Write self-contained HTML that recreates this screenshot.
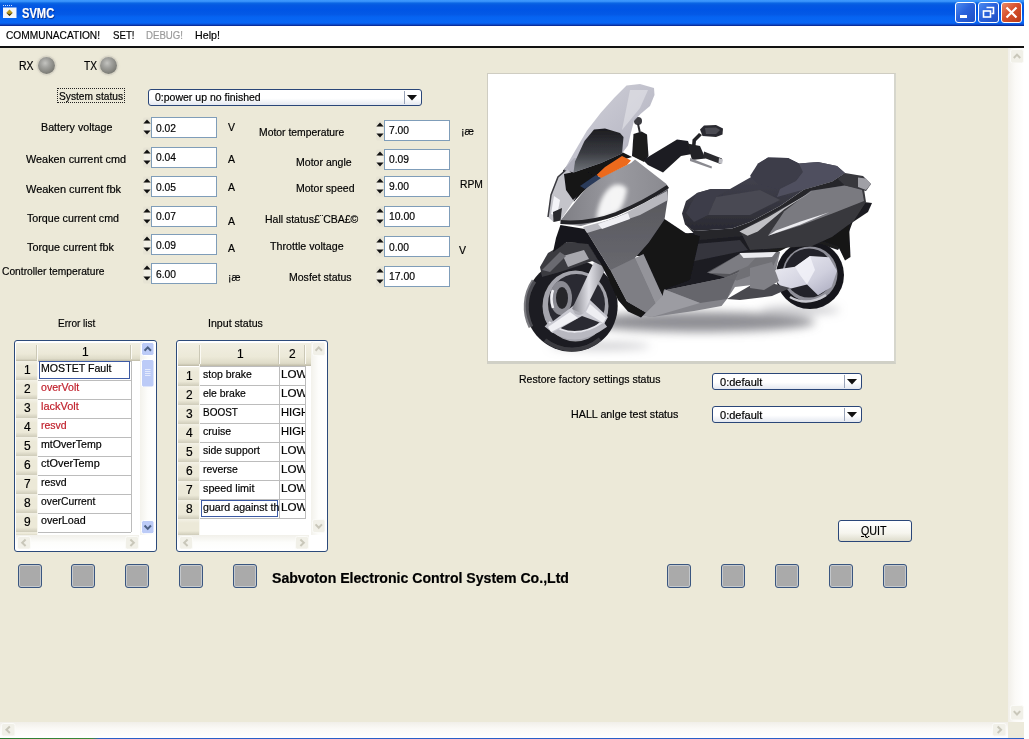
<!DOCTYPE html><html><head><meta charset="utf-8"><title>SVMC</title><style>
html,body{margin:0;padding:0;}
body{width:1029px;height:739px;overflow:hidden;background:#fff;position:relative;font-family:"Liberation Sans",sans-serif;font-size:11px;color:#000;}
#win{position:absolute;left:0;top:0;width:1024px;height:739px;background:#ece9d8;overflow:hidden;}
.abs{position:absolute;}
.t{position:absolute;white-space:nowrap;-webkit-text-stroke:.2px;font-size:11px;line-height:14px;height:14px;transform-origin:0 50%;}
#title{position:absolute;left:0;top:0;width:1024px;height:26px;background:linear-gradient(to bottom,#3c98fd 0,#3a94fb 5%,#0a66e4 12%,#0458e2 20%,#0055e5 38%,#0459e6 55%,#0664f2 66%,#0866f5 88%,#0a52d8 93%,#0a2e9c 98%,#0a2e9c 100%);}
.wb{position:absolute;top:2px;width:21px;height:21px;box-sizing:border-box;border:1px solid #fff;border-radius:3px;background:linear-gradient(135deg,#4d8cf0 0%,#2a62dc 45%,#1f4fc4 100%);}
.wb.close{background:linear-gradient(135deg,#e88a6a 0%,#d8512c 45%,#b83a18 100%);}
#menu{position:absolute;left:0;top:26px;width:1024px;height:20px;background:#fff;}
#mline{position:absolute;left:0;top:46px;width:1024px;height:2px;background:#111;}
.num{position:absolute;box-sizing:border-box;height:21px;width:66px;border:1px solid #7f9db9;background:#fff;}
.spin{position:absolute;width:8px;height:21px;}
.combo{position:absolute;box-sizing:border-box;height:17px;border:1px solid #2a4678;border-radius:3px;background:linear-gradient(to bottom,#fff 0%,#fff 55%,#e4e8f0 100%);}
.combo i{position:absolute;right:16px;top:1px;width:1px;height:13px;background:#9aa4b8;}
.combo b{position:absolute;right:3.5px;top:4.5px;width:11px;height:6px;background:#111;clip-path:polygon(0 0,100% 0,50% 100%);}
.sq{position:absolute;top:564px;width:24px;height:24px;box-sizing:border-box;border:1px solid #3a5680;border-radius:3px;background:#aaa;box-shadow:inset 0 0 0 1px #c4c8cc;}
.led{position:absolute;width:17px;height:17px;border-radius:50%;background:radial-gradient(circle at 42% 36%,#c4c4c0 0%,#a2a29e 30%,#85857f 62%,#60605a 100%);box-shadow:0 0 0 1.5px rgba(214,211,196,.9),0 0 2px 2px rgba(225,222,208,.6);}
</style></head><body><div id="win">
<div id="title"><svg class="abs" style="left:2px;top:5px" width="16" height="15" viewBox="0 0 16 15"><path d="M1 .5h10" stroke="#cfe0ff" stroke-width="1" stroke-dasharray="1 1"/><rect x="1" y="2.5" width="13.5" height="10.5" fill="#f4f6fa"/><path d="M7.5 4.5l3.2 3.2-3.2 3.4-3.2-3.4z" fill="#b89a20"/><path d="M4.3 7.7l3.2 3.4 3.2-3.4-3.2 1.6z" fill="#3a3010"/></svg>
<div class="t" style="left:22px;top:4.84px;font-size:14.3px;line-height:17.3px;height:17.3px;font-weight:bold;transform:scaleX(0.7794);color:#fff;text-shadow:1px 1px 1px #0a2a80;">SVMC</div>
<div class="wb" style="left:955px"><svg width="19" height="19" viewBox="0 0 19 19"><rect x="4" y="12" width="7" height="3" fill="#fff"/></svg></div>
<div class="wb" style="left:978px"><svg width="19" height="19" viewBox="0 0 19 19"><path d="M7.5 4.5h7v6h-2" fill="none" stroke="#fff" stroke-width="1.6"/><rect x="4.5" y="8" width="7" height="6" fill="none" stroke="#fff" stroke-width="1.6"/></svg></div>
<div class="wb close" style="left:1001px"><svg width="19" height="19" viewBox="0 0 19 19"><path d="M4.5 4.5l10 10M14.5 4.5l-10 10" stroke="#fff" stroke-width="2.2"/></svg></div>
</div>
<div id="menu"></div><div id="mline"></div>
<div class="t" style="left:6px;top:28.02px;font-size:11.6px;line-height:14.6px;height:14.6px;transform:scaleX(0.8757);color:#000;">COMMUNACATION!</div>
<div class="t" style="left:112.5px;top:28.02px;font-size:11.6px;line-height:14.6px;height:14.6px;transform:scaleX(0.8339);color:#000;">SET!</div>
<div class="t" style="left:146px;top:28.02px;font-size:11.6px;line-height:14.6px;height:14.6px;transform:scaleX(0.8323);color:#9a9a9a;">DEBUG!</div>
<div class="t" style="left:195px;top:28.02px;font-size:11.6px;line-height:14.6px;height:14.6px;transform:scaleX(0.9233);color:#000;">Help!</div>
<div class="t" style="left:19.4px;top:59.04px;font-size:12.4px;line-height:15.4px;height:15.4px;transform:scaleX(0.8479);">RX</div>
<div class="led" style="left:37.5px;top:56.5px"></div>
<div class="t" style="left:84px;top:59.04px;font-size:12.4px;line-height:15.4px;height:15.4px;transform:scaleX(0.8205);">TX</div>
<div class="led" style="left:99.5px;top:56.5px"></div>
<div class="abs" style="left:57px;top:88px;width:68px;height:15px;box-sizing:border-box;border:1px dotted #222"></div>
<div class="t" style="left:59px;top:88.52px;font-size:11.6px;line-height:14.6px;height:14.6px;transform:scaleX(0.8790);">System status</div>
<div class="combo" style="left:148px;top:89px;width:274px"><i></i><b></b></div>
<div class="t" style="left:154.8px;top:90.32px;font-size:11.6px;line-height:14.6px;height:14.6px;transform:scaleX(0.9060);">0:power up no finished</div>
<div class="t" style="left:41px;top:120.02px;font-size:11.6px;line-height:14.6px;height:14.6px;transform:scaleX(0.9232);">Battery voltage</div>
<svg class="spin" style="left:142.5px;top:117.2px" width="8" height="21" viewBox="0 0 8 21"><rect x="0" y="0.5" width="8" height="20" rx="2" fill="#e6e3d4"/><rect x="0.5" y="7" width="7" height="7" fill="#f2f0e6"/><path d="M4 2.6L7.6 6.4H0.4z" fill="#111"/><path d="M4 17.4L7.6 13.6H0.4z" fill="#111"/></svg>
<div class="num" style="left:151px;top:117.2px"></div>
<div class="t" style="left:155.5px;top:120.52px;font-size:11.6px;line-height:14.6px;height:14.6px;transform:scaleX(0.8858);">0.02</div>
<div class="t" style="left:228px;top:120.02px;font-size:11.6px;line-height:14.6px;height:14.6px;transform:scaleX(0.9051);">V</div>
<div class="t" style="left:26px;top:152.02px;font-size:11.6px;line-height:14.6px;height:14.6px;transform:scaleX(0.9368);">Weaken current cmd</div>
<svg class="spin" style="left:142.5px;top:147px" width="8" height="21" viewBox="0 0 8 21"><rect x="0" y="0.5" width="8" height="20" rx="2" fill="#e6e3d4"/><rect x="0.5" y="7" width="7" height="7" fill="#f2f0e6"/><path d="M4 2.6L7.6 6.4H0.4z" fill="#111"/><path d="M4 17.4L7.6 13.6H0.4z" fill="#111"/></svg>
<div class="num" style="left:151px;top:147px"></div>
<div class="t" style="left:155.5px;top:150.32px;font-size:11.6px;line-height:14.6px;height:14.6px;transform:scaleX(0.8858);">0.04</div>
<div class="t" style="left:228px;top:152.02px;font-size:11.6px;line-height:14.6px;height:14.6px;transform:scaleX(0.9051);">A</div>
<div class="t" style="left:26px;top:182.02px;font-size:11.6px;line-height:14.6px;height:14.6px;transform:scaleX(0.9469);">Weaken current fbk</div>
<svg class="spin" style="left:142.5px;top:176.4px" width="8" height="21" viewBox="0 0 8 21"><rect x="0" y="0.5" width="8" height="20" rx="2" fill="#e6e3d4"/><rect x="0.5" y="7" width="7" height="7" fill="#f2f0e6"/><path d="M4 2.6L7.6 6.4H0.4z" fill="#111"/><path d="M4 17.4L7.6 13.6H0.4z" fill="#111"/></svg>
<div class="num" style="left:151px;top:176.4px"></div>
<div class="t" style="left:155.5px;top:179.72px;font-size:11.6px;line-height:14.6px;height:14.6px;transform:scaleX(0.8858);">0.05</div>
<div class="t" style="left:228px;top:179.52px;font-size:11.6px;line-height:14.6px;height:14.6px;transform:scaleX(0.9051);">A</div>
<div class="t" style="left:27px;top:211.02px;font-size:11.6px;line-height:14.6px;height:14.6px;transform:scaleX(0.9210);">Torque current cmd</div>
<svg class="spin" style="left:142.5px;top:205.5px" width="8" height="21" viewBox="0 0 8 21"><rect x="0" y="0.5" width="8" height="20" rx="2" fill="#e6e3d4"/><rect x="0.5" y="7" width="7" height="7" fill="#f2f0e6"/><path d="M4 2.6L7.6 6.4H0.4z" fill="#111"/><path d="M4 17.4L7.6 13.6H0.4z" fill="#111"/></svg>
<div class="num" style="left:151px;top:205.5px"></div>
<div class="t" style="left:155.5px;top:208.82px;font-size:11.6px;line-height:14.6px;height:14.6px;transform:scaleX(0.8858);">0.07</div>
<div class="t" style="left:228px;top:214.02px;font-size:11.6px;line-height:14.6px;height:14.6px;transform:scaleX(0.9051);">A</div>
<div class="t" style="left:27px;top:239.52px;font-size:11.6px;line-height:14.6px;height:14.6px;transform:scaleX(0.9309);">Torque current fbk</div>
<svg class="spin" style="left:142.5px;top:234.2px" width="8" height="21" viewBox="0 0 8 21"><rect x="0" y="0.5" width="8" height="20" rx="2" fill="#e6e3d4"/><rect x="0.5" y="7" width="7" height="7" fill="#f2f0e6"/><path d="M4 2.6L7.6 6.4H0.4z" fill="#111"/><path d="M4 17.4L7.6 13.6H0.4z" fill="#111"/></svg>
<div class="num" style="left:151px;top:234.2px"></div>
<div class="t" style="left:155.5px;top:237.52px;font-size:11.6px;line-height:14.6px;height:14.6px;transform:scaleX(0.8858);">0.09</div>
<div class="t" style="left:228px;top:240.72px;font-size:11.6px;line-height:14.6px;height:14.6px;transform:scaleX(0.9051);">A</div>
<div class="t" style="left:1.5px;top:263.52px;font-size:11.6px;line-height:14.6px;height:14.6px;transform:scaleX(0.8836);">Controller temperature</div>
<svg class="spin" style="left:142.5px;top:263.3px" width="8" height="21" viewBox="0 0 8 21"><rect x="0" y="0.5" width="8" height="20" rx="2" fill="#e6e3d4"/><rect x="0.5" y="7" width="7" height="7" fill="#f2f0e6"/><path d="M4 2.6L7.6 6.4H0.4z" fill="#111"/><path d="M4 17.4L7.6 13.6H0.4z" fill="#111"/></svg>
<div class="num" style="left:151px;top:263.3px"></div>
<div class="t" style="left:155.5px;top:266.62px;font-size:11.6px;line-height:14.6px;height:14.6px;transform:scaleX(0.8858);">6.00</div>
<div class="t" style="left:228.4px;top:270.02px;font-size:11.6px;line-height:14.6px;height:14.6px;transform:scaleX(0.8750);">¡æ</div>
<div class="t" style="left:258.7px;top:125.02px;font-size:11.6px;line-height:14.6px;height:14.6px;transform:scaleX(0.8944);">Motor temperature</div>
<svg class="spin" style="left:375.5px;top:120px" width="8" height="21" viewBox="0 0 8 21"><rect x="0" y="0.5" width="8" height="20" rx="2" fill="#e6e3d4"/><rect x="0.5" y="7" width="7" height="7" fill="#f2f0e6"/><path d="M4 2.6L7.6 6.4H0.4z" fill="#111"/><path d="M4 17.4L7.6 13.6H0.4z" fill="#111"/></svg>
<div class="num" style="left:384px;top:120px"></div>
<div class="t" style="left:389px;top:123.32px;font-size:11.6px;line-height:14.6px;height:14.6px;transform:scaleX(0.8858);">7.00</div>
<div class="t" style="left:461.4px;top:124.22px;font-size:11.6px;line-height:14.6px;height:14.6px;transform:scaleX(0.9173);">¡æ</div>
<div class="t" style="left:295.5px;top:154.72px;font-size:11.6px;line-height:14.6px;height:14.6px;transform:scaleX(0.9096);">Motor angle</div>
<svg class="spin" style="left:375.5px;top:149px" width="8" height="21" viewBox="0 0 8 21"><rect x="0" y="0.5" width="8" height="20" rx="2" fill="#e6e3d4"/><rect x="0.5" y="7" width="7" height="7" fill="#f2f0e6"/><path d="M4 2.6L7.6 6.4H0.4z" fill="#111"/><path d="M4 17.4L7.6 13.6H0.4z" fill="#111"/></svg>
<div class="num" style="left:384px;top:149px"></div>
<div class="t" style="left:389px;top:152.32px;font-size:11.6px;line-height:14.6px;height:14.6px;transform:scaleX(0.8858);">0.09</div>
<div class="t" style="left:295.5px;top:181.02px;font-size:11.6px;line-height:14.6px;height:14.6px;transform:scaleX(0.9076);">Motor speed</div>
<svg class="spin" style="left:375.5px;top:176px" width="8" height="21" viewBox="0 0 8 21"><rect x="0" y="0.5" width="8" height="20" rx="2" fill="#e6e3d4"/><rect x="0.5" y="7" width="7" height="7" fill="#f2f0e6"/><path d="M4 2.6L7.6 6.4H0.4z" fill="#111"/><path d="M4 17.4L7.6 13.6H0.4z" fill="#111"/></svg>
<div class="num" style="left:384px;top:176px"></div>
<div class="t" style="left:389px;top:179.32px;font-size:11.6px;line-height:14.6px;height:14.6px;transform:scaleX(0.8858);">9.00</div>
<div class="t" style="left:459.7px;top:177.02px;font-size:11.6px;line-height:14.6px;height:14.6px;transform:scaleX(0.8888);">RPM</div>
<div class="t" style="left:265.4px;top:212.02px;font-size:11.6px;line-height:14.6px;height:14.6px;transform:scaleX(0.9035);">Hall status£¨CBA£©</div>
<svg class="spin" style="left:375.5px;top:206px" width="8" height="21" viewBox="0 0 8 21"><rect x="0" y="0.5" width="8" height="20" rx="2" fill="#e6e3d4"/><rect x="0.5" y="7" width="7" height="7" fill="#f2f0e6"/><path d="M4 2.6L7.6 6.4H0.4z" fill="#111"/><path d="M4 17.4L7.6 13.6H0.4z" fill="#111"/></svg>
<div class="num" style="left:384px;top:206px"></div>
<div class="t" style="left:388.5px;top:209.32px;font-size:11.6px;line-height:14.6px;height:14.6px;transform:scaleX(0.8961);">10.00</div>
<div class="t" style="left:270.4px;top:239.02px;font-size:11.6px;line-height:14.6px;height:14.6px;transform:scaleX(0.9209);">Throttle voltage</div>
<svg class="spin" style="left:375.5px;top:236.2px" width="8" height="21" viewBox="0 0 8 21"><rect x="0" y="0.5" width="8" height="20" rx="2" fill="#e6e3d4"/><rect x="0.5" y="7" width="7" height="7" fill="#f2f0e6"/><path d="M4 2.6L7.6 6.4H0.4z" fill="#111"/><path d="M4 17.4L7.6 13.6H0.4z" fill="#111"/></svg>
<div class="num" style="left:384px;top:236.2px"></div>
<div class="t" style="left:389px;top:239.52px;font-size:11.6px;line-height:14.6px;height:14.6px;transform:scaleX(0.8858);">0.00</div>
<div class="t" style="left:459px;top:242.52px;font-size:11.6px;line-height:14.6px;height:14.6px;transform:scaleX(0.9051);">V</div>
<div class="t" style="left:288.6px;top:270.02px;font-size:11.6px;line-height:14.6px;height:14.6px;transform:scaleX(0.9079);">Mosfet status</div>
<svg class="spin" style="left:375.5px;top:266px" width="8" height="21" viewBox="0 0 8 21"><rect x="0" y="0.5" width="8" height="20" rx="2" fill="#e6e3d4"/><rect x="0.5" y="7" width="7" height="7" fill="#f2f0e6"/><path d="M4 2.6L7.6 6.4H0.4z" fill="#111"/><path d="M4 17.4L7.6 13.6H0.4z" fill="#111"/></svg>
<div class="num" style="left:384px;top:266px"></div>
<div class="t" style="left:388.5px;top:269.32px;font-size:11.6px;line-height:14.6px;height:14.6px;transform:scaleX(0.8961);">17.00</div>
<div class="t" style="left:518.5px;top:372.32px;font-size:11.6px;line-height:14.6px;height:14.6px;transform:scaleX(0.9073);">Restore factory settings status</div>
<div class="combo" style="left:712px;top:373px;width:150px"><i></i><b></b></div>
<div class="t" style="left:719.7px;top:374.52px;font-size:11.6px;line-height:14.6px;height:14.6px;transform:scaleX(0.9509);">0:default</div>
<div class="t" style="left:571px;top:406.52px;font-size:11.6px;line-height:14.6px;height:14.6px;transform:scaleX(0.9240);">HALL anlge test status</div>
<div class="combo" style="left:712px;top:406px;width:150px"><i></i><b></b></div>
<div class="t" style="left:719.7px;top:407.52px;font-size:11.6px;line-height:14.6px;height:14.6px;transform:scaleX(0.9509);">0:default</div>
<div class="abs" style="left:838px;top:520px;width:74px;height:22px;box-sizing:border-box;border:1px solid #2a4678;border-radius:3px;background:linear-gradient(to bottom,#fff 0%,#f6f5ee 60%,#dedccc 100%)"></div>
<div class="t" style="left:861px;top:523.63px;font-size:12px;line-height:15px;height:15px;transform:scaleX(0.8894);"><u>Q</u>UIT</div>
<div class="sq" style="left:18px"></div>
<div class="sq" style="left:71px"></div>
<div class="sq" style="left:125px"></div>
<div class="sq" style="left:178.5px"></div>
<div class="sq" style="left:232.5px"></div>
<div class="sq" style="left:667px"></div>
<div class="sq" style="left:721px"></div>
<div class="sq" style="left:775px"></div>
<div class="sq" style="left:829px"></div>
<div class="sq" style="left:883px"></div>
<div class="t" style="left:271.8px;top:570.09px;font-size:14px;line-height:17px;height:17px;font-weight:bold;transform:scaleX(1.0074);">Sabvoton Electronic Control System Co.,Ltd</div>
<div class="t" style="left:58px;top:315.72px;font-size:11.6px;line-height:14.6px;height:14.6px;transform:scaleX(0.8666);">Error list</div>
<div class="t" style="left:208.4px;top:315.72px;font-size:11.6px;line-height:14.6px;height:14.6px;transform:scaleX(0.9157);">Input status</div>
<div class="abs" style="left:14px;top:340px;width:143px;height:212.29999999999995px;box-sizing:border-box;border:1px solid #2c4a7a;border-radius:3px;background:#fff;overflow:hidden">
<div class="abs" style="left:1.0px;top:1.5px;width:124.0px;height:18.0px;background:linear-gradient(to bottom,#f1efe2 0%,#ece9d8 60%,#dedbc8 88%,#bdb9a6 100%)"></div>
<div class="abs" style="left:1.0px;top:20.0px;width:21.5px;height:19.0px;background:linear-gradient(to bottom,#f3f1e6 0%,#ece9d8 25%,#ece9d8 75%,#cfccba 100%)"></div>
<div class="abs" style="left:1.0px;top:39.0px;width:21.5px;height:19.0px;background:linear-gradient(to bottom,#f3f1e6 0%,#ece9d8 25%,#ece9d8 75%,#cfccba 100%)"></div>
<div class="abs" style="left:1.0px;top:58.0px;width:21.5px;height:19.0px;background:linear-gradient(to bottom,#f3f1e6 0%,#ece9d8 25%,#ece9d8 75%,#cfccba 100%)"></div>
<div class="abs" style="left:1.0px;top:77.0px;width:21.5px;height:19.0px;background:linear-gradient(to bottom,#f3f1e6 0%,#ece9d8 25%,#ece9d8 75%,#cfccba 100%)"></div>
<div class="abs" style="left:1.0px;top:96.0px;width:21.5px;height:19.0px;background:linear-gradient(to bottom,#f3f1e6 0%,#ece9d8 25%,#ece9d8 75%,#cfccba 100%)"></div>
<div class="abs" style="left:1.0px;top:115.0px;width:21.5px;height:19.0px;background:linear-gradient(to bottom,#f3f1e6 0%,#ece9d8 25%,#ece9d8 75%,#cfccba 100%)"></div>
<div class="abs" style="left:1.0px;top:134.0px;width:21.5px;height:19.0px;background:linear-gradient(to bottom,#f3f1e6 0%,#ece9d8 25%,#ece9d8 75%,#cfccba 100%)"></div>
<div class="abs" style="left:1.0px;top:153.0px;width:21.5px;height:19.0px;background:linear-gradient(to bottom,#f3f1e6 0%,#ece9d8 25%,#ece9d8 75%,#cfccba 100%)"></div>
<div class="abs" style="left:1.0px;top:172.0px;width:21.5px;height:19.0px;background:linear-gradient(to bottom,#f3f1e6 0%,#ece9d8 25%,#ece9d8 75%,#cfccba 100%)"></div>
<div class="abs" style="left:1.0px;top:191.0px;width:21.5px;height:3.3px;background:linear-gradient(to bottom,#f3f1e6 0%,#ece9d8 25%,#ece9d8 75%,#cfccba 100%)"></div>
<div class="abs" style="left:21.5px;top:3.5px;width:1.0px;height:190.8px;background:#f8f7f0"></div>
<div class="abs" style="left:22.0px;top:3.5px;width:1.0px;height:14.0px;background:#fbfaf4"></div>
<div class="abs" style="left:21.0px;top:3.5px;width:1.0px;height:14.0px;background:#cbc8b6"></div>
<div class="abs" style="left:115.5px;top:3.5px;width:1.0px;height:14.0px;background:#fbfaf4"></div>
<div class="abs" style="left:114.5px;top:3.5px;width:1.0px;height:14.0px;background:#cbc8b6"></div>
<div class="abs" style="left:22.5px;top:19.5px;width:93.5px;height:1.0px;background:#bcbcbc"></div>
<div class="abs" style="left:22.5px;top:38.5px;width:93.5px;height:1.0px;background:#bcbcbc"></div>
<div class="abs" style="left:22.5px;top:57.5px;width:93.5px;height:1.0px;background:#bcbcbc"></div>
<div class="abs" style="left:22.5px;top:76.5px;width:93.5px;height:1.0px;background:#bcbcbc"></div>
<div class="abs" style="left:22.5px;top:95.5px;width:93.5px;height:1.0px;background:#bcbcbc"></div>
<div class="abs" style="left:22.5px;top:114.5px;width:93.5px;height:1.0px;background:#bcbcbc"></div>
<div class="abs" style="left:22.5px;top:133.5px;width:93.5px;height:1.0px;background:#bcbcbc"></div>
<div class="abs" style="left:22.5px;top:152.5px;width:93.5px;height:1.0px;background:#bcbcbc"></div>
<div class="abs" style="left:22.5px;top:171.5px;width:93.5px;height:1.0px;background:#bcbcbc"></div>
<div class="abs" style="left:22.5px;top:190.5px;width:93.5px;height:1.0px;background:#bcbcbc"></div>
<div class="abs" style="left:115.5px;top:20.0px;width:1.0px;height:171.0px;background:#bcbcbc"></div>
<div class="abs" style="left:23.5px;top:20.3px;width:91.3px;height:17.4px;box-sizing:border-box;border:1px solid #3c5aa4"></div>
<div class="abs" style="left:125.0px;top:1.0px;width:15.5px;height:193.3px;background:linear-gradient(to right,#f3f2ec,#fdfdfb 50%,#fff)"></div>
<div class="abs" style="left:1.0px;top:194.3px;width:122.5px;height:14.4px;background:linear-gradient(to bottom,#f1f0ea,#fdfdfb 50%,#fff)"></div>
</div>
<svg class="abs" style="left:140.5px;top:342.2px;opacity:1" width="13.5" height="14" viewBox="0 0 13.5 14"><rect x=".5" y=".5" width="12.5" height="13" rx="2" fill="#bccbf7" stroke="#fff"/><path d="M3.55 8.8L6.75 5.4L9.95 8.8" fill="none" stroke="#4d6185" stroke-width="2"/></svg>
<svg class="abs" style="left:140.5px;top:519.8px;opacity:1" width="13.5" height="14.2" viewBox="0 0 13.5 14.2"><rect x=".5" y=".5" width="12.5" height="13.2" rx="2" fill="#bccbf7" stroke="#fff"/><path d="M3.55 5.5L6.75 8.9L9.95 5.5" fill="none" stroke="#4d6185" stroke-width="2"/></svg>
<svg class="abs" style="left:140.5px;top:358.5px" width="13.5" height="28.5" viewBox="0 0 13.5 28.5"><rect x=".5" y=".5" width="12.5" height="27.5" rx="2" fill="#bccbf7" stroke="#fff"/><path d="M4 10.5h5.5M4 12.5h5.5M4 14.5h5.5M4 16.5h5.5" stroke="#e4ebfd" stroke-width="1"/></svg>
<svg class="abs" style="left:16.7px;top:535.8px;opacity:1" width="14" height="13.6" viewBox="0 0 14 13.6"><rect x=".5" y=".5" width="13" height="12.6" rx="2" fill="#f1f0e8" stroke="#fbfbf8"/><path d="M8.6 3.5999999999999996L5.2 6.8L8.6 10.0" fill="none" stroke="#c9c7ba" stroke-width="2"/></svg>
<svg class="abs" style="left:124.5px;top:535.8px;opacity:1" width="14" height="13.6" viewBox="0 0 14 13.6"><rect x=".5" y=".5" width="13" height="12.6" rx="2" fill="#f1f0e8" stroke="#fbfbf8"/><path d="M5.4 3.5999999999999996L8.8 6.8L5.4 10.0" fill="none" stroke="#c9c7ba" stroke-width="2"/></svg>
<div class="t" style="left:81.7px;top:344.64px;font-size:12.4px;line-height:15.4px;height:15.4px;transform:scaleX(0.9658);">1</div>
<div class="t" style="left:40.8px;top:361.02px;font-size:11.6px;line-height:14.6px;height:14.6px;transform:scaleX(0.9145);color:#000;">MOSTET Fault</div>
<div class="t" style="left:24px;top:363.34px;font-size:12.4px;line-height:15.4px;height:15.4px;transform:scaleX(0.9658);">1</div>
<div class="t" style="left:40.8px;top:380.02px;font-size:11.6px;line-height:14.6px;height:14.6px;transform:scaleX(0.9116);color:#c0202c;">overVolt</div>
<div class="t" style="left:24px;top:382.34px;font-size:12.4px;line-height:15.4px;height:15.4px;transform:scaleX(0.9658);">2</div>
<div class="t" style="left:40.8px;top:399.02px;font-size:11.6px;line-height:14.6px;height:14.6px;transform:scaleX(0.9432);color:#c0202c;">lackVolt</div>
<div class="t" style="left:24px;top:401.34px;font-size:12.4px;line-height:15.4px;height:15.4px;transform:scaleX(0.9658);">3</div>
<div class="t" style="left:40.8px;top:418.02px;font-size:11.6px;line-height:14.6px;height:14.6px;transform:scaleX(0.9062);color:#c0202c;">resvd</div>
<div class="t" style="left:24px;top:420.34px;font-size:12.4px;line-height:15.4px;height:15.4px;transform:scaleX(0.9658);">4</div>
<div class="t" style="left:40.8px;top:437.02px;font-size:11.6px;line-height:14.6px;height:14.6px;transform:scaleX(0.9147);color:#000;">mtOverTemp</div>
<div class="t" style="left:24px;top:439.34px;font-size:12.4px;line-height:15.4px;height:15.4px;transform:scaleX(0.9658);">5</div>
<div class="t" style="left:40.8px;top:456.02px;font-size:11.6px;line-height:14.6px;height:14.6px;transform:scaleX(0.9392);color:#000;">ctOverTemp</div>
<div class="t" style="left:24px;top:458.34px;font-size:12.4px;line-height:15.4px;height:15.4px;transform:scaleX(0.9658);">6</div>
<div class="t" style="left:40.8px;top:475.02px;font-size:11.6px;line-height:14.6px;height:14.6px;transform:scaleX(0.9062);color:#000;">resvd</div>
<div class="t" style="left:24px;top:477.34px;font-size:12.4px;line-height:15.4px;height:15.4px;transform:scaleX(0.9658);">7</div>
<div class="t" style="left:40.8px;top:494.02px;font-size:11.6px;line-height:14.6px;height:14.6px;transform:scaleX(0.8886);color:#000;">overCurrent</div>
<div class="t" style="left:24px;top:496.34px;font-size:12.4px;line-height:15.4px;height:15.4px;transform:scaleX(0.9658);">8</div>
<div class="t" style="left:40.8px;top:513.02px;font-size:11.6px;line-height:14.6px;height:14.6px;transform:scaleX(0.9243);color:#000;">overLoad</div>
<div class="t" style="left:24px;top:515.34px;font-size:12.4px;line-height:15.4px;height:15.4px;transform:scaleX(0.9658);">9</div>
<div class="abs" style="left:38px;top:532px;width:93px;height:3.3px;overflow:hidden">
<div class="t" style="left:2.8px;top:0.02px;font-size:11.6px;line-height:14.6px;height:14.6px;transform:scaleX(0.8417);">overSpeed</div>
</div>
<div class="abs" style="left:176px;top:340px;width:151.5px;height:212.29999999999995px;box-sizing:border-box;border:1px solid #2c4a7a;border-radius:3px;background:#fff;overflow:hidden">
<div class="abs" style="left:1.0px;top:1.5px;width:133.0px;height:23.0px;background:linear-gradient(to bottom,#f1efe2 0%,#ece9d8 60%,#dedbc8 88%,#bdb9a6 100%)"></div>
<div class="abs" style="left:1.0px;top:25.5px;width:22.0px;height:19.0px;background:linear-gradient(to bottom,#f3f1e6 0%,#ece9d8 25%,#ece9d8 75%,#cfccba 100%)"></div>
<div class="abs" style="left:1.0px;top:44.5px;width:22.0px;height:19.0px;background:linear-gradient(to bottom,#f3f1e6 0%,#ece9d8 25%,#ece9d8 75%,#cfccba 100%)"></div>
<div class="abs" style="left:1.0px;top:63.5px;width:22.0px;height:19.0px;background:linear-gradient(to bottom,#f3f1e6 0%,#ece9d8 25%,#ece9d8 75%,#cfccba 100%)"></div>
<div class="abs" style="left:1.0px;top:82.5px;width:22.0px;height:19.0px;background:linear-gradient(to bottom,#f3f1e6 0%,#ece9d8 25%,#ece9d8 75%,#cfccba 100%)"></div>
<div class="abs" style="left:1.0px;top:101.5px;width:22.0px;height:19.0px;background:linear-gradient(to bottom,#f3f1e6 0%,#ece9d8 25%,#ece9d8 75%,#cfccba 100%)"></div>
<div class="abs" style="left:1.0px;top:120.5px;width:22.0px;height:19.0px;background:linear-gradient(to bottom,#f3f1e6 0%,#ece9d8 25%,#ece9d8 75%,#cfccba 100%)"></div>
<div class="abs" style="left:1.0px;top:139.5px;width:22.0px;height:19.0px;background:linear-gradient(to bottom,#f3f1e6 0%,#ece9d8 25%,#ece9d8 75%,#cfccba 100%)"></div>
<div class="abs" style="left:1.0px;top:158.5px;width:22.0px;height:19.0px;background:linear-gradient(to bottom,#f3f1e6 0%,#ece9d8 25%,#ece9d8 75%,#cfccba 100%)"></div>
<div class="abs" style="left:1.0px;top:177.5px;width:22.0px;height:16.8px;background:linear-gradient(to bottom,#f3f1e6 0%,#ece9d8 25%,#ece9d8 75%,#cfccba 100%)"></div>
<div class="abs" style="left:22.0px;top:3.5px;width:1.0px;height:190.8px;background:#f8f7f0"></div>
<div class="abs" style="left:22.5px;top:3.5px;width:1.0px;height:19.0px;background:#fbfaf4"></div>
<div class="abs" style="left:21.5px;top:3.5px;width:1.0px;height:19.0px;background:#cbc8b6"></div>
<div class="abs" style="left:101.5px;top:3.5px;width:1.0px;height:19.0px;background:#fbfaf4"></div>
<div class="abs" style="left:100.5px;top:3.5px;width:1.0px;height:19.0px;background:#cbc8b6"></div>
<div class="abs" style="left:128.1px;top:3.5px;width:1.0px;height:19.0px;background:#fbfaf4"></div>
<div class="abs" style="left:127.1px;top:3.5px;width:1.0px;height:19.0px;background:#cbc8b6"></div>
<div class="abs" style="left:23.0px;top:25.0px;width:105.6px;height:1.0px;background:#bcbcbc"></div>
<div class="abs" style="left:23.0px;top:44.0px;width:105.6px;height:1.0px;background:#bcbcbc"></div>
<div class="abs" style="left:23.0px;top:63.0px;width:105.6px;height:1.0px;background:#bcbcbc"></div>
<div class="abs" style="left:23.0px;top:82.0px;width:105.6px;height:1.0px;background:#bcbcbc"></div>
<div class="abs" style="left:23.0px;top:101.0px;width:105.6px;height:1.0px;background:#bcbcbc"></div>
<div class="abs" style="left:23.0px;top:120.0px;width:105.6px;height:1.0px;background:#bcbcbc"></div>
<div class="abs" style="left:23.0px;top:139.0px;width:105.6px;height:1.0px;background:#bcbcbc"></div>
<div class="abs" style="left:23.0px;top:158.0px;width:105.6px;height:1.0px;background:#bcbcbc"></div>
<div class="abs" style="left:23.0px;top:177.0px;width:105.6px;height:1.0px;background:#bcbcbc"></div>
<div class="abs" style="left:101.5px;top:25.5px;width:1.0px;height:152.0px;background:#bcbcbc"></div>
<div class="abs" style="left:128.1px;top:25.5px;width:1.0px;height:152.0px;background:#bcbcbc"></div>
<div class="abs" style="left:24.0px;top:158.8px;width:76.8px;height:17.4px;box-sizing:border-box;border:1px solid #3c5aa4"></div>
<div class="abs" style="left:134.0px;top:1.0px;width:15.0px;height:193.3px;background:linear-gradient(to right,#f3f2ec,#fdfdfb 50%,#fff)"></div>
<div class="abs" style="left:1.0px;top:194.3px;width:130.8px;height:14.4px;background:linear-gradient(to bottom,#f1f0ea,#fdfdfb 50%,#fff)"></div>
</div>
<svg class="abs" style="left:311.5px;top:342.2px;opacity:1" width="13.5" height="14" viewBox="0 0 13.5 14"><rect x=".5" y=".5" width="12.5" height="13" rx="2" fill="#f1f0e8" stroke="#fbfbf8"/><path d="M3.55 8.8L6.75 5.4L9.95 8.8" fill="none" stroke="#c9c7ba" stroke-width="2"/></svg>
<svg class="abs" style="left:311.5px;top:519.3px;opacity:1" width="13.5" height="14" viewBox="0 0 13.5 14"><rect x=".5" y=".5" width="12.5" height="13" rx="2" fill="#f1f0e8" stroke="#fbfbf8"/><path d="M3.55 5.4L6.75 8.8L9.95 5.4" fill="none" stroke="#c9c7ba" stroke-width="2"/></svg>
<svg class="abs" style="left:178.7px;top:535.8px;opacity:1" width="14" height="13.6" viewBox="0 0 14 13.6"><rect x=".5" y=".5" width="13" height="12.6" rx="2" fill="#f1f0e8" stroke="#fbfbf8"/><path d="M8.6 3.5999999999999996L5.2 6.8L8.6 10.0" fill="none" stroke="#c9c7ba" stroke-width="2"/></svg>
<svg class="abs" style="left:294.8px;top:535.8px;opacity:1" width="14" height="13.6" viewBox="0 0 14 13.6"><rect x=".5" y=".5" width="13" height="12.6" rx="2" fill="#f1f0e8" stroke="#fbfbf8"/><path d="M5.4 3.5999999999999996L8.8 6.8L5.4 10.0" fill="none" stroke="#c9c7ba" stroke-width="2"/></svg>
<div class="t" style="left:236.7px;top:346.94px;font-size:12.4px;line-height:15.4px;height:15.4px;transform:scaleX(0.9658);">1</div>
<div class="t" style="left:289.4px;top:346.94px;font-size:12.4px;line-height:15.4px;height:15.4px;transform:scaleX(0.9658);">2</div>
<div class="t" style="left:202.6px;top:367.12px;font-size:11.6px;line-height:14.6px;height:14.6px;transform:scaleX(0.9032);">stop brake</div>
<div class="abs" style="left:279.5px;top:366.5px;width:25.6px;height:18px;overflow:hidden">
<div class="t" style="left:1.8px;top:0.62px;font-size:11.6px;line-height:14.6px;height:14.6px;transform:scaleX(1.0030);">LOW</div>
</div>
<div class="t" style="left:185.8px;top:369.14px;font-size:12.4px;line-height:15.4px;height:15.4px;transform:scaleX(0.9658);">1</div>
<div class="t" style="left:202.6px;top:386.12px;font-size:11.6px;line-height:14.6px;height:14.6px;transform:scaleX(0.8993);">ele brake</div>
<div class="abs" style="left:279.5px;top:385.5px;width:25.6px;height:18px;overflow:hidden">
<div class="t" style="left:1.8px;top:0.62px;font-size:11.6px;line-height:14.6px;height:14.6px;transform:scaleX(1.0030);">LOW</div>
</div>
<div class="t" style="left:185.8px;top:388.14px;font-size:12.4px;line-height:15.4px;height:15.4px;transform:scaleX(0.9658);">2</div>
<div class="t" style="left:202.6px;top:405.12px;font-size:11.6px;line-height:14.6px;height:14.6px;transform:scaleX(0.8597);">BOOST</div>
<div class="abs" style="left:279.5px;top:404.5px;width:25.6px;height:18px;overflow:hidden">
<div class="t" style="left:1.8px;top:0.62px;font-size:11.6px;line-height:14.6px;height:14.6px;transform:scaleX(0.9660);">HIGH</div>
</div>
<div class="t" style="left:185.8px;top:407.14px;font-size:12.4px;line-height:15.4px;height:15.4px;transform:scaleX(0.9658);">3</div>
<div class="t" style="left:202.6px;top:424.12px;font-size:11.6px;line-height:14.6px;height:14.6px;transform:scaleX(0.9115);">cruise</div>
<div class="abs" style="left:279.5px;top:423.5px;width:25.6px;height:18px;overflow:hidden">
<div class="t" style="left:1.8px;top:0.62px;font-size:11.6px;line-height:14.6px;height:14.6px;transform:scaleX(0.9660);">HIGH</div>
</div>
<div class="t" style="left:185.8px;top:426.14px;font-size:12.4px;line-height:15.4px;height:15.4px;transform:scaleX(0.9658);">4</div>
<div class="t" style="left:202.6px;top:443.12px;font-size:11.6px;line-height:14.6px;height:14.6px;transform:scaleX(0.9007);">side support</div>
<div class="abs" style="left:279.5px;top:442.5px;width:25.6px;height:18px;overflow:hidden">
<div class="t" style="left:1.8px;top:0.62px;font-size:11.6px;line-height:14.6px;height:14.6px;transform:scaleX(1.0030);">LOW</div>
</div>
<div class="t" style="left:185.8px;top:445.14px;font-size:12.4px;line-height:15.4px;height:15.4px;transform:scaleX(0.9658);">5</div>
<div class="t" style="left:202.6px;top:462.12px;font-size:11.6px;line-height:14.6px;height:14.6px;transform:scaleX(0.9025);">reverse</div>
<div class="abs" style="left:279.5px;top:461.5px;width:25.6px;height:18px;overflow:hidden">
<div class="t" style="left:1.8px;top:0.62px;font-size:11.6px;line-height:14.6px;height:14.6px;transform:scaleX(1.0030);">LOW</div>
</div>
<div class="t" style="left:185.8px;top:464.14px;font-size:12.4px;line-height:15.4px;height:15.4px;transform:scaleX(0.9658);">6</div>
<div class="t" style="left:202.6px;top:481.12px;font-size:11.6px;line-height:14.6px;height:14.6px;transform:scaleX(0.9274);">speed limit</div>
<div class="abs" style="left:279.5px;top:480.5px;width:25.6px;height:18px;overflow:hidden">
<div class="t" style="left:1.8px;top:0.62px;font-size:11.6px;line-height:14.6px;height:14.6px;transform:scaleX(1.0030);">LOW</div>
</div>
<div class="t" style="left:185.8px;top:483.14px;font-size:12.4px;line-height:15.4px;height:15.4px;transform:scaleX(0.9658);">7</div>
<div class="t" style="left:202.6px;top:500.12px;font-size:11.6px;line-height:14.6px;height:14.6px;transform:scaleX(0.9188);">guard against th</div>
<div class="abs" style="left:279.5px;top:499.5px;width:25.6px;height:18px;overflow:hidden">
<div class="t" style="left:1.8px;top:0.62px;font-size:11.6px;line-height:14.6px;height:14.6px;transform:scaleX(1.0030);">LOW</div>
</div>
<div class="t" style="left:185.8px;top:502.14px;font-size:12.4px;line-height:15.4px;height:15.4px;transform:scaleX(0.9658);">8</div>
<div class="abs" style="left:487px;top:73px;width:408.5px;height:290.5px;box-sizing:border-box;background:#fff;border-style:solid;border-color:#cfcdc2 #d6d6cc #d0d0c6 #cfcdc2;border-width:1px 2px 3px 1px"></div>
<svg class="abs" style="left:488px;top:74px" width="405" height="286" viewBox="488 74 405 286">
<defs>
<filter id="b1" x="-20%" y="-20%" width="140%" height="140%"><feGaussianBlur stdDeviation="0.7"/></filter>
<filter id="b2" x="-30%" y="-30%" width="160%" height="160%"><feGaussianBlur stdDeviation="2"/></filter>
<filter id="b6" x="-30%" y="-100%" width="160%" height="300%"><feGaussianBlur stdDeviation="5"/></filter>
<linearGradient id="gws" x1="0" y1="0" x2="1" y2="1"><stop offset="0" stop-color="#d0d0d8"/><stop offset=".5" stop-color="#bcbcc8"/><stop offset="1" stop-color="#a8a8b6"/></linearGradient>
<linearGradient id="gdash" x1="0" y1="0" x2="0" y2="1"><stop offset="0" stop-color="#1c1c20"/><stop offset=".55" stop-color="#3a3c42"/><stop offset="1" stop-color="#70747a"/></linearGradient>
<linearGradient id="gup" x1="0" y1="0" x2="1" y2="0"><stop offset="0" stop-color="#7e7e84"/><stop offset=".5" stop-color="#9a9aa0"/><stop offset="1" stop-color="#8a8a90"/></linearGradient>
<linearGradient id="glow" x1="0" y1="0" x2="0" y2="1"><stop offset="0" stop-color="#56565c"/><stop offset="1" stop-color="#727278"/></linearGradient>
<linearGradient id="gseat" x1="0" y1="0" x2="0" y2="1"><stop offset="0" stop-color="#4a4a58"/><stop offset="1" stop-color="#2a2a32"/></linearGradient>
<linearGradient id="gsil" x1="0" y1="0" x2="1" y2="1"><stop offset="0" stop-color="#c8c8cc"/><stop offset="1" stop-color="#808086"/></linearGradient>
<linearGradient id="ghub" x1="0" y1="0" x2="1" y2="1"><stop offset="0" stop-color="#f0f0f6"/><stop offset=".6" stop-color="#d0d0de"/><stop offset="1" stop-color="#a8a8bc"/></linearGradient>
<linearGradient id="gfork" x1="0" y1="0" x2="1" y2="0"><stop offset="0" stop-color="#808088"/><stop offset=".5" stop-color="#e0e0e6"/><stop offset="1" stop-color="#8c8c94"/></linearGradient>
</defs>
<g filter="url(#b6)">
<ellipse cx="700" cy="322" rx="115" ry="10" fill="#7c7c82" opacity=".85"/>
<ellipse cx="600" cy="346" rx="50" ry="4" fill="#a0a0a6" opacity=".5"/>
<ellipse cx="800" cy="310" rx="40" ry="4" fill="#a0a0a6" opacity=".6"/>
</g>
<g filter="url(#b1)">
<!-- rear wheel -->
<circle cx="810" cy="275" r="34" fill="#18181c"/>
<circle cx="810" cy="274" r="27.5" fill="#8e8e98"/>
<circle cx="809" cy="273" r="24.5" fill="#24242a"/>
<path d="M776 269.500L795 266.700L810 256L829 257.200L837 271L831.500 287L818 295.300L807 284.400L791 288.500L781.300 287L774.500 279z" fill="url(#ghub)"/>
<path d="M795 266.700L810 256L815 270L807 284.400L800 275z" fill="#f4f4fa" opacity=".8"/>
<path d="M790 297q17 10 36 -2" fill="none" stroke="#c8c8d0" stroke-width="2.5"/>
<!-- rear fender -->
<path d="M760 246L780 240L832 236L853 221L849 232L838 250L820 244L790 246L770 256z" fill="#1a1a1e"/>
<path d="M822 226L849 224L850.500 257L845 260.500L838 246L820 240z" fill="#141418"/>
<path d="M856 201L872 203L868 212L850 224z" fill="#1c1c20"/>
<!-- front wheel -->
<circle cx="571.7" cy="305.800" r="46" fill="#1c1c20"/>
<path d="M531 327A46 46 0 0 1 534 281" fill="none" stroke="#5a5a60" stroke-width="5" opacity=".8"/>
<path d="M545 340A43 43 0 0 0 600 339" fill="none" stroke="#44444a" stroke-width="4" opacity=".8"/>
<ellipse cx="575.5" cy="306" rx="33" ry="35.5" fill="#a4a4ac"/>
<ellipse cx="576.5" cy="304" rx="28.500" ry="30" fill="#2c2c32"/>
<path d="M547 324q26 24 58 0" fill="none" stroke="#b8b8c0" stroke-width="7"/><path d="M549 322q24 20 54 0" fill="none" stroke="#e4e4ea" stroke-width="2"/><ellipse cx="561" cy="298" rx="11" ry="17" fill="#8a8a92"/><ellipse cx="562" cy="298" rx="6" ry="11" fill="#26262a"/><path d="M553 290q-3 8 0 18" fill="none" stroke="#f0f0f4" stroke-width="2.500"/>
<path d="M577 303L548 325L552 333L582 316L604 324L608 317L590 300z" fill="#c8c8d0"/>
<path d="M570 312L548 327L551 332L578 318z" fill="#f0f0f4"/>
<path d="M590 304L606 318L603 323L586 312z" fill="#eeeef2"/>

<circle cx="579" cy="309" r="6" fill="#b0b0b8"/>
<!-- fork -->
<path d="M594 262L606 268L583 314L572 309z" fill="url(#gfork)"/>
<path d="M586 258L602 256L606 268L594 262z" fill="#3a3a40"/>
<!-- front fender -->
<path d="M540 267L548 253L567 242L588 243L598 259L581 265L560 272L542 277z" fill="#3a3a40"/>
<path d="M563 256L584 250L589 259L568 267z" fill="#a8a8ae"/>
<path d="M542 270L560 252L566 256L550 272z" fill="#6a6a70"/>
<!-- floor / dark body -->
<path d="M640 262L655 226L672 236L690 233L735 232L760 225L780 240L760 262L722 280L666 291z" fill="#1c1c22"/>
<path d="M672 246L740 240L748 250L690 262z" fill="#34343c"/>
<!-- lower side panel -->
<path d="M635 258L640 261L666 290L722 278.500L738 273L746 254L780 252L776 270L752 285L735 287L727 299L721.500 306L694 311L652 317L640 315L627 302z" fill="#85858b"/>
<path d="M666 290L722 278.500L738 273L727 299L700 303z" fill="#66666c"/>
<path d="M708 273L740 254L760 253L748 266L730 274z" fill="#b8b8be"/>
<path d="M640 300L666 290L700 303L652 317L640 315z" fill="#9c9ca2"/>
<path d="M706.700 272.400L739.400 254L780 252L772 268.400L737 280.600z" fill="#68686e" opacity=".75"/>
<path d="M727 299L760 280L790 288L772 296L740 300z" fill="#4a4a50"/>
<path d="M739.400 253L776 252L772 257L743.500 258z" fill="#ececf0"/>
<path d="M750 268L772 262L779 281L764 290L750 288z" fill="#808086"/>
<!-- under seat dark -->
<path d="M685 224L694 231L732 228.500L750 222L780 206L804 189.500L832 181.500L845 173L850 186L815 196L780 212L745 236L700 240z" fill="#26262c"/>
<!-- rear side panels -->
<path d="M740 231L780 209L815 191L845 185L864 189L866 202L853.700 221L832 237L812 246L780 248L750 250z" fill="#38383c"/>
<path d="M810.800 190.800L845 185.500L861.800 188.800L864 201L833 213.300L800.600 225.500L768 235.700L784.300 211.200z" fill="#7a7a80"/>
<path d="M739.400 231.600L768 217.300L812.900 190.800L784.300 209.200L757.800 231.600L747.600 235.700z" fill="#c0c0c4"/>
<path d="M768 235.700L800.600 224.500L829.200 212.200L800.600 221.400L776 230.600z" fill="#ececf0"/>
<path d="M838 179L845 173L863 176L871 184L866 191L845 185.500z" fill="#38383e"/><path d="M858 177.500L866 178.500L871 184L866 190L858 187z" fill="#a0a0a6"/>
<!-- seat -->
<path d="M682 213.500L686 201L697 193L711 189L730 189L752 176.500L758 164L768 157.500L788 158L799 163.500L818 162L837 166L845 173L832 181.500L804 189.500L780 206L750 222L732 228.500L694 231L685 224.500z" fill="url(#gseat)"/>
<path d="M750 176L758 163.500L768 157.500L788 158L799 163.500L803 172L796 181L777 189.500L758 184z" fill="#3c3c4a"/>
<path d="M799 163.500L818 162L837 166L845 173L832 181.500L804 189.500L777 197L780 189L796 181L803 172z" fill="#50505e"/>
<path d="M697 193L711 189L730 189L716 197L708 215L694 222L686 213z" fill="#3e3e48"/>
<path d="M716 197L760 190L780 200L750 215L708 215z" fill="#484852"/>
<!-- wedge -->
<path d="M598 258L610.700 270.300L627 301.600L646 312.500L641 317.500L628 311.500L618 300L610 282z" fill="#141418"/>
<!-- interior black -->
<path d="M658 219L664.500 219L685.500 233L700 236L690 280L664 289.500L662.500 296L641 256L636 256L650 238z" fill="#141418"/>
<!-- front fairing lower -->
<path d="M585 229L640 208L668 188L667.500 200L664.500 219.500L648.600 242.800L635 258L655.500 303L646 312.500L627 301.500L610.500 270z" fill="url(#glow)"/>
<path d="M610.500 270L635 258L655.500 303L646 312.500L627 301.500z" fill="#7e7e84"/>
<path d="M635 258L643.500 254L662.500 296L655.500 303z" fill="#94949a"/>
<path d="M560.400 225L585 229L611 271L598 260L588 244L567 242L553 252L556 238z" fill="#18181c"/>
<!-- light band under seam -->
<path d="M583 227L616 218L667 191L668 200L640 215L600 229L587 233z" fill="#b8b8be"/>
<path d="M598 224L628 213L630 219L602 229z" fill="#f0f0f4"/>
<!-- front fairing upper -->
<path d="M560.500 220.500L585 189.500L597 179L631 163L635 159.500L666.500 184L668 189.500L635 207L601 220.500L581 226L564.500 224z" fill="url(#gup)"/>
<path d="M596 220Q599 195 612 186Q621 182 627 189Q625 203 619 211Q609 218 596 220z" fill="#fff" opacity=".9" filter="url(#b2)"/>
<path d="M560.500 222Q590 224 616 214Q645 202 668 186.500" fill="none" stroke="#222226" stroke-width="3.8"/>
<!-- black under windshield -->
<path d="M563 170.500L574 158L594.500 160L622 152L632 157L622 160L597 177L585 189.500L574 201.500L566 196L562 185.500z" fill="#121216"/>
<!-- headlight -->
<path d="M548 217L551 195L558 177L567 169L585 184L560.500 220.500L553.500 222z" fill="#c4c4ca"/>
<path d="M564 174L584 170L597 179L585 189.500L573 200L566 190z" fill="#141418"/>
<path d="M551 214L554 196L560 200L557 216z" fill="#f4f4f8"/>
<path d="M548 217L551 195L558 177L567 169" fill="none" stroke="#3a3a40" stroke-width="1.5"/>
<path d="M553 212L562 208L560.500 220.500L553.500 222z" fill="#2a2a2e"/>
<!-- handlebar stem + arm -->
<path d="M633.500 134L641.500 131.500L647 134.500L648.500 156L644 162L632 156z" fill="#1a1a1e"/>
<path d="M643 160L648 157L677 139.500L688 141L692 154L681 156L663 172.500L648 165z" fill="#1c1c20"/>
<path d="M687.500 143.500L700 146L705.500 158.500L692 160z" fill="#222226"/>
<path d="M704 151.500L722 158.500L720.500 164L703 157.500z" fill="#2a2a2e"/>
<path d="M719 158L723 159.500L722 164L718.500 163z" fill="#c0c0c6"/>
<path d="M690 158L712 166.500L711.500 168.500L690 161z" fill="#8a8a90"/>
<path d="M699 133L692.500 139.500L692 146L695.500 146L696 141L702 135z" fill="#222226"/>
<path d="M700 129.500L704 125.500L716 125L723 128.500L722.500 134.500L716 137L702.500 136z" fill="#2c2c30"/>
<path d="M705 128L716 127.500L720 130L716 134L706 134z" fill="#4c4c52"/>
<circle cx="638" cy="121" r="4" fill="#3a3a40"/>
<path d="M638 124L640 133" stroke="#2a2a2e" stroke-width="2"/>
<!-- windshield -->
<path d="M626.500 85.500L640 84L654 88L654.500 95L650 106L640.500 114L634 121L630.500 134.500L628 145.500L622 153.500L601 163L573.500 172.500L564 170L573.500 153.500L587 130.500L601 112.500L614.500 97.500z" fill="url(#gws)" opacity=".92"/>
<path d="M630 90L648 90L640 108L622 130z" fill="#e4e4ea" opacity=".6"/>
<!-- dash -->
<path d="M594 129.500L605 128.500L620 133L623.500 137L622 153.500L601 163L573.500 172.500L575 161.500L584.500 141z" fill="url(#gdash)"/>
<!-- orange -->
<path d="M622 156L631 160.500L627 165L601 178L596.500 175L605 167z" fill="#ec6a1e"/>
<path d="M596 175L601 178L585 189L580 186z" fill="#2a3a5a"/>
</g>
</svg>

<div class="abs" style="left:1008px;top:48px;width:16px;height:674px;background:linear-gradient(to right,#f1efe9,#fbfaf7 45%,#fff)"></div>
<div class="abs" style="left:0;top:722px;width:1008px;height:15.5px;background:linear-gradient(to bottom,#f1efe9,#fbfaf7 45%,#fff)"></div>
<div class="abs" style="left:1008px;top:722px;width:16px;height:15.5px;background:#eceadb"></div>
<svg class="abs" style="left:1009.5px;top:48.8px;opacity:1" width="14" height="14.5" viewBox="0 0 14 14.5"><rect x=".5" y=".5" width="13" height="13.5" rx="2" fill="#f1f0e8" stroke="#fbfbf8"/><path d="M3.8 9.05L7.0 5.65L10.2 9.05" fill="none" stroke="#c9c7ba" stroke-width="2"/></svg>
<svg class="abs" style="left:1009.5px;top:705px;opacity:1" width="14" height="15.5" viewBox="0 0 14 15.5"><rect x=".5" y=".5" width="13" height="14.5" rx="2" fill="#f1f0e8" stroke="#fbfbf8"/><path d="M3.8 6.15L7.0 9.55L10.2 6.15" fill="none" stroke="#c9c7ba" stroke-width="2"/></svg>
<svg class="abs" style="left:1px;top:723px;opacity:1" width="14.5" height="13.5" viewBox="0 0 14.5 13.5"><rect x=".5" y=".5" width="13.5" height="12.5" rx="2" fill="#f1f0e8" stroke="#fbfbf8"/><path d="M8.85 3.55L5.45 6.75L8.85 9.95" fill="none" stroke="#c9c7ba" stroke-width="2"/></svg>
<svg class="abs" style="left:992.3px;top:723px;opacity:1" width="14.5" height="13.5" viewBox="0 0 14.5 13.5"><rect x=".5" y=".5" width="13.5" height="12.5" rx="2" fill="#f1f0e8" stroke="#fbfbf8"/><path d="M5.65 3.55L9.05 6.75L5.65 9.95" fill="none" stroke="#c9c7ba" stroke-width="2"/></svg>
<div class="abs" style="left:0;top:737.8px;width:1024px;height:2px;background:linear-gradient(to right,#2c7a30 0,#3a8a3a 92px,#2a5fc8 100px,#2a5fc8 100%)"></div>
</div></body></html>
